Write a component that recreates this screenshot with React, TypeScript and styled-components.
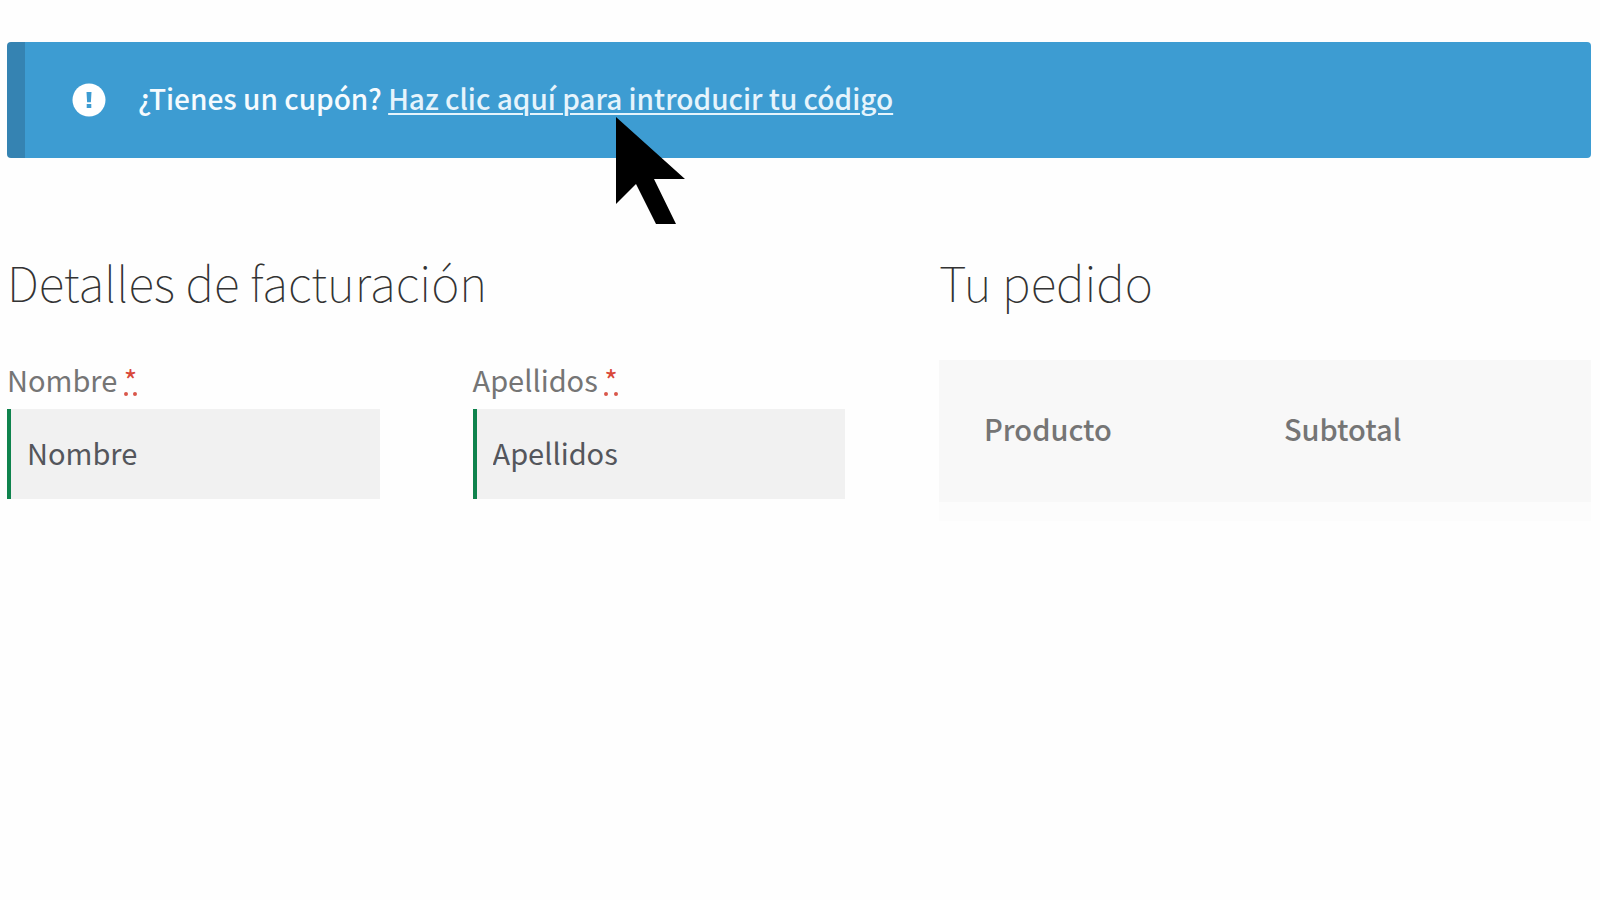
import React from "react";
import styled, { createGlobalStyle } from "styled-components";

const GlobalStyle = createGlobalStyle`
  *, *::before, *::after { box-sizing: border-box; }
  body {
    margin: 0;
    background: #fefefe;
    color: #757575;
    font-family: "Noto Sans CJK SC", "Noto Sans", sans-serif;
    font-size: 29px;
    line-height: 40px;
  }
`;

const Page = styled.main`
  padding: 42px 9px 40px 7px;
`;

const Notice = styled.div`
  display: flex;
  align-items: center;
  gap: 32px;
  min-height: 116px;
  padding: 0 48px 0 47px;
  border-left: 18px solid #3583b2;
  border-radius: 4px;
  background: #3d9cd2;
  color: #f6fbfe;
  font-size: 28px;
  font-weight: 500;
`;

const NoticeIcon = styled.svg`
  flex: none;
  width: 34px;
  height: 34px;
`;

const NoticeText = styled.p`
  margin: 0;
  padding-bottom: 4px;
`;

const CouponLink = styled.a`
  position: relative;
  color: #e6f4fc;
  text-decoration: underline;
  text-decoration-thickness: 2px;
  text-underline-offset: 3px;
`;

const Pointer = styled.svg`
  position: absolute;
  top: 39px;
  left: 228px;
  width: 69px;
  height: 107px;
`;

const Columns = styled.div`
  display: grid;
  grid-template-columns: 838fr 652fr;
  gap: 94px;
  margin-top: 93px;
`;

const Heading = styled.h3`
  margin: 0 0 48px;
  color: #333;
  font-size: 48px;
  font-weight: 100;
  line-height: 60px;
`;

const Fields = styled.div`
  display: grid;
  grid-template-columns: 1fr 1fr;
  gap: 93px;
`;

const Field = styled.div`
  display: flex;
  flex-direction: column;
  gap: 10px;
`;

const Label = styled.label`
  line-height: 40px;
`;

const Required = styled.abbr`
  display: inline-block;
  height: 37px;
  border-bottom: 4px dotted #d9574a;
  color: #d9483a;
  line-height: 40px;
  text-decoration: none;
  vertical-align: top;
`;

const TextInput = styled.input`
  width: 100%;
  height: 90px;
  padding: 0 16px 4px;
  border: 0;
  border-left: 4px solid #0f834d;
  border-radius: 0;
  outline: 0;
  background: #f1f1f1;
  color: #54565c;
  font: inherit;
`;

const OrderTable = styled.table`
  width: 100%;
  margin-top: 49px;
  border-collapse: collapse;
  table-layout: fixed;
`;

const HeadCell = styled.th<{ $width: string }>`
  width: ${(p) => p.$width};
  height: 142px;
  padding: 0 0 6px 45px;
  background: #f8f8f8;
  text-align: left;
  font-weight: 500;
`;

const BodyCell = styled.td`
  height: 19px;
  padding: 0;
  background: #fcfcfc;
`;

const fields = [
  { id: "nombre", label: "Nombre" },
  { id: "apellidos", label: "Apellidos" },
];

export default function App() {
  return (
    <>
      <GlobalStyle />
      <Page>
        <Notice>
          <NoticeIcon viewBox="0 0 34 34" aria-hidden="true">
            <circle cx="17" cy="17" r="16.5" fill="#fff" />
            <path d="M14.5 9h5l-.6 10.2h-3.8z M14.7 21h4.6v4h-4.6z" fill="#3d9cd2" />
          </NoticeIcon>
          <NoticeText>
            ¿Tienes un cupón?{" "}
            <CouponLink href="#cupon">
              Haz clic aquí para introducir tu código
              <Pointer viewBox="0 0 69 107" aria-hidden="true">
                <path d="M0 0 69 62H38L60 107H40L20 67 0 87z" fill="#000" />
              </Pointer>
            </CouponLink>
          </NoticeText>
        </Notice>
        <Columns>
          <section>
            <Heading>Detalles de facturación</Heading>
            <Fields>
              {fields.map((f) => (
                <Field key={f.id}>
                  <Label htmlFor={f.id}>
                    {f.label} <Required title="obligatorio">*</Required>
                  </Label>
                  <TextInput id={f.id} type="text" defaultValue={f.label} />
                </Field>
              ))}
            </Fields>
          </section>
          <section>
            <Heading>Tu pedido</Heading>
            <OrderTable>
              <thead>
                <tr>
                  <HeadCell scope="col" $width="46%">Producto</HeadCell>
                  <HeadCell scope="col" $width="54%">Subtotal</HeadCell>
                </tr>
              </thead>
              <tbody>
                <tr>
                  <BodyCell />
                  <BodyCell />
                </tr>
              </tbody>
            </OrderTable>
          </section>
        </Columns>
      </Page>
    </>
  );
}
